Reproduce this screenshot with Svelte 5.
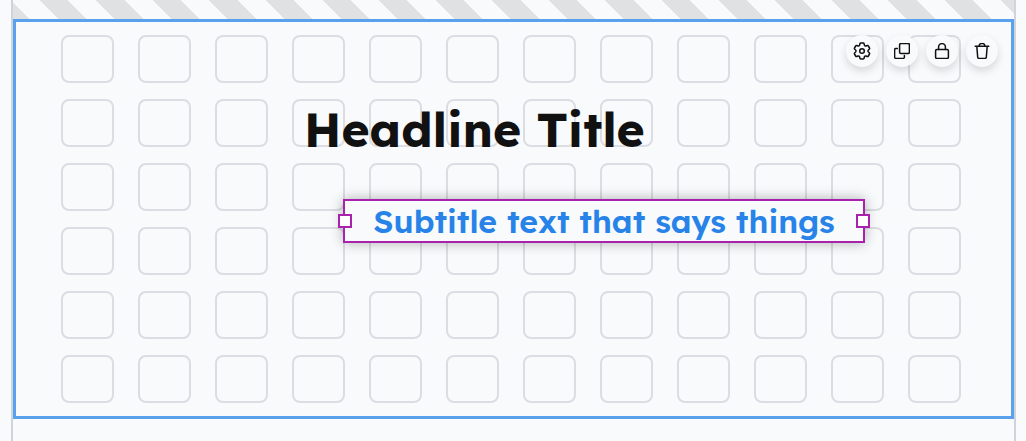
<script>
  const cells = Array.from({ length: 72 }, (_, i) => i);
</script>

<main class="page">
  <div class="stripes"></div>
  <section class="block" aria-label="Section editor">
    <div class="grid" aria-hidden="true">
      {#each cells as cell (cell)}
        <span class="cell"></span>
      {/each}
    </div>

    <h1 class="item headline">Headline Title</h1>

    <div class="item selected">
      <h2 class="subtitle">Subtitle text that says things</h2>
      <button class="handle start" aria-label="Resize left"></button>
      <button class="handle end" aria-label="Resize right"></button>
    </div>

    <div class="toolbar">
      <button class="tool" aria-label="Settings">
        <svg viewBox="3 3 18 18" width="16" height="16" overflow="visible">
          <path stroke-width="1.7" d="M9.594 3.94c.09-.542.56-.94 1.11-.94h2.593c.55 0 1.02.398 1.11.94l.213 1.281c.063.374.313.686.645.87.074.04.147.083.22.127.325.196.72.257 1.075.124l1.217-.456a1.125 1.125 0 0 1 1.37.49l1.296 2.247a1.125 1.125 0 0 1-.26 1.431l-1.003.827c-.293.241-.438.613-.43.992a7.723 7.723 0 0 1 0 .255c-.008.378.137.75.43.991l1.004.827c.424.35.534.955.26 1.43l-1.298 2.247a1.125 1.125 0 0 1-1.369.491l-1.217-.456c-.355-.133-.75-.072-1.076.124a6.47 6.47 0 0 1-.22.128c-.331.183-.581.495-.644.869l-.213 1.281c-.09.543-.56.94-1.11.94h-2.594c-.55 0-1.019-.398-1.11-.94l-.213-1.281c-.062-.374-.312-.686-.644-.87a6.52 6.52 0 0 1-.22-.127c-.325-.196-.72-.257-1.076-.124l-1.217.456a1.125 1.125 0 0 1-1.369-.49l-1.297-2.247a1.125 1.125 0 0 1 .26-1.431l1.004-.827c.292-.24.437-.613.43-.991a6.932 6.932 0 0 1 0-.255c.007-.38-.138-.751-.43-.992l-1.004-.827a1.125 1.125 0 0 1-.26-1.43l1.297-2.247a1.125 1.125 0 0 1 1.37-.491l1.216.456c.356.133.751.072 1.076-.124.072-.044.146-.086.22-.128.332-.183.582-.495.644-.869l.214-1.28Z" />
          <circle cx="12" cy="12" r="2.6" stroke-width="1.7" />
        </svg>
      </button>
      <button class="tool" aria-label="Duplicate">
        <svg viewBox="0 0 16 16" width="16" height="16">
          <rect x="5.6" y="0.6" width="9.8" height="9.8" rx="1.2" />
          <path d="M3.4 5.6H1.8A1.2 1.2 0 0 0 .6 6.8v7.4a1.2 1.2 0 0 0 1.2 1.2h7.4a1.2 1.2 0 0 0 1.2-1.2v-1.6" />
        </svg>
      </button>
      <button class="tool" aria-label="Lock">
        <svg viewBox="0 0 16 16" width="16" height="16">
          <rect x="1.6" y="6.6" width="12.8" height="8.8" rx="1.2" />
          <path d="M4.6 6.6V4a3.4 3.4 0 0 1 6.8 0v2.6" />
        </svg>
      </button>
      <button class="tool" aria-label="Delete">
        <svg viewBox="0 0 16 16" width="16" height="16">
          <path d="M1.2 3.2h13.6M2.8 3.2l.9 11.1a1.2 1.2 0 0 0 1.2 1.1h6.2a1.2 1.2 0 0 0 1.2-1.1l.9-11.1M5 3.2c.2-1.6 1-2.6 2.2-2.6h1.6c1.2 0 2 1 2.2 2.6" />
        </svg>
      </button>
    </div>
  </section>
</main>

<style>
  :global(body) {
    background: #f8fafc;
  }
  .page {
    box-sizing: border-box;
    min-height: 100vh;
    margin: 0 10px 0 11px;
    border: solid #ced4da;
    border-width: 0 2px;
    font-family: Lexend, "Open Sans", sans-serif;
  }
  .stripes {
    height: 19px;
    background: repeating-linear-gradient(
      45deg,
      #dfe1e3 0 12px,
      #f8fafc 12px 32px,
      #dfe1e3 32px 40px
    );
  }
  .block {
    position: relative;
    padding: 13px 50px 13px 45px;
    border: 3px solid #59a1ec;
  }
  .grid {
    display: grid;
    grid-template-columns: repeat(12, 1fr);
    grid-auto-rows: 48px;
    gap: 16px 24px;
  }
  .cell {
    border: 2px solid #dbdde3;
    border-radius: 8px;
  }
  .item {
    position: absolute;
    white-space: nowrap;
  }
  .headline {
    top: 77px;
    left: 288px;
    margin: 0;
    color: #111;
    font-size: 48px;
    font-weight: 700;
    line-height: 60px;
  }
  .selected {
    box-sizing: border-box;
    top: 177px;
    left: 327px;
    width: 522px;
    border: 2px solid #a922ab;
    background: #f8fafc;
    box-shadow: 0 0 12px rgba(0, 0, 0, 0.3);
  }
  .subtitle {
    margin: 0;
    color: #2783e8;
    font-size: 32px;
    font-weight: 600;
    line-height: 40px;
    text-align: center;
  }
  .handle {
    position: absolute;
    top: 13px;
    box-sizing: border-box;
    width: 14px;
    height: 14px;
    padding: 0;
    border: 2px solid #a922ab;
    background: #fff;
    cursor: ew-resize;
  }
  .start {
    left: -7px;
  }
  .end {
    right: -7px;
  }
  .toolbar {
    position: absolute;
    top: 13px;
    right: 13px;
    display: flex;
    gap: 8px;
  }
  .tool {
    display: grid;
    place-items: center;
    width: 32px;
    height: 32px;
    padding: 0;
    border: 0;
    border-radius: 50%;
    background: #f8fafc;
    box-shadow: 0 4px 8px rgba(0, 0, 0, 0.14);
    color: #111;
    cursor: pointer;
  }
  svg {
    fill: none;
    stroke: currentColor;
    stroke-width: 1.5;
    stroke-linejoin: round;
    stroke-linecap: round;
  }
</style>
